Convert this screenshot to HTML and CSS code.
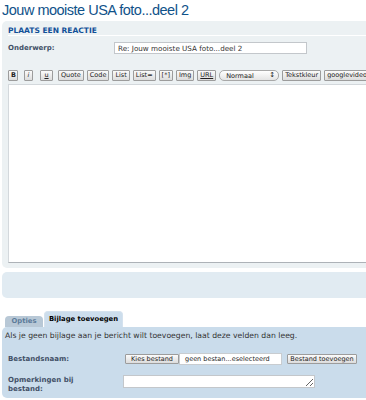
FILE: index.html
```html
<!DOCTYPE html>
<html>
<head>
  <meta charset="UTF-8">
  <title>Plaats een reactie</title>
  <link rel="stylesheet" href="styles.css">
</head>
<body>
  <div class="page">
    <h2 class="topic-title">Jouw mooiste USA foto...deel 2</h2>

    <div class="panel post-panel">
      <h3>Plaats een reactie</h3>

      <div class="subject-row">
        <label for="subject">Onderwerp:</label>
        <input id="subject" class="subject-input" type="text" value="Re: Jouw mooiste USA foto...deel 2">
      </div>

      <div class="toolbar">
        <button class="btn btn-b">B</button>
        <button class="btn btn-i">i</button>
        <button class="btn btn-u">u</button>
        <button class="btn">Quote</button>
        <button class="btn">Code</button>
        <button class="btn">List</button>
        <button class="btn">List=</button>
        <button class="btn">[*]</button>
        <button class="btn">Img</button>
        <button class="btn btn-url">URL</button>
        <div class="size-select">Normaal <span class="arrows">&#x2195;</span></div>
        <button class="btn">Tekstkleur</button>
        <button class="btn">googlevideo</button>
      </div>

      <textarea class="message"></textarea>
    </div>

    <div class="panel buttons-panel"></div>

    <ul class="tabs">
      <li class="tab">Opties</li>
      <li class="tab tab-active">Bijlage toevoegen</li>
    </ul>

    <div class="panel attach-panel">
      <p class="hint">Als je geen bijlage aan je bericht wilt toevoegen, laat deze velden dan leeg.</p>

      <div class="attach-row file-row">
        <label>Bestandsnaam:</label>
        <div class="file-input">
          <span class="btn choose">Kies bestand</span>
          <span class="file-name">geen bestan...eselecteerd</span>
        </div>
        <button class="btn add-file">Bestand toevoegen</button>
      </div>

      <div class="attach-row comment-row">
        <label for="comment">Opmerkingen bij bestand:</label>
        <textarea id="comment" class="comment"></textarea>
      </div>
    </div>
  </div>
</body>
</html>
```

FILE: styles.css
```css
html, body {
  margin: 0;
  overflow: hidden;
  background: #fff;
}
body {
  font-family: "DejaVu Sans", Verdana, sans-serif;
  color: #28313F;
}
.page {
  width: 364px;
  padding-left: 2px;
}
.topic-title {
  margin: 0 0 1px 0;
  font: normal 14.5px/20px "Liberation Sans", Arial, sans-serif;
  letter-spacing: -0.5px;
  color: #105289;
}
.panel {
  border-radius: 5px 0 0 5px;
}

/* reactie */
.post-panel {
  background: #ECF1F3;
  padding: 5px 0 5px 6px;
  overflow: hidden;
}
.post-panel h3 {
  margin: 0;
  font-size: 7.5px;
  line-height: 9px;
  font-weight: bold;
  text-transform: uppercase;
  color: #115098;
  border-bottom: 1px solid #fff;
}
.subject-row {
  display: flex;
  align-items: center;
  margin-top: 6px;
}
.subject-row label,
.attach-row label {
  font-size: 7px;
  line-height: 9px;
  font-weight: bold;
  color: #425067;
}
.subject-row label {
  width: 106px;
}
.subject-input {
  width: 193px;
  height: 12px;
  box-sizing: border-box;
  margin: 0;
  padding: 0 3px;
  border: 1px solid #C3C7CB;
  background: #fff;
  font-family: "DejaVu Sans", Verdana, sans-serif;
  font-size: 7.2px;
  color: #333;
  outline: none;
}
.toolbar {
  display: flex;
  gap: 3px;
  height: 11px;
  margin-top: 16px;
  overflow: hidden;
}
.btn {
  flex-shrink: 0;
  height: 11px;
  box-sizing: border-box;
  margin: 0;
  padding: 0 2px;
  border: 1px solid #9C9C9C;
  border-radius: 1px;
  background: linear-gradient(#FBFBFB, #DCDCDC);
  font-family: "DejaVu Sans", Verdana, sans-serif;
  font-size: 6.5px;
  line-height: 9px;
  color: #222;
  white-space: nowrap;
}
.btn-b {
  width: 10px;
  font-weight: bold;
  margin-right: 3px;
}
.btn-i {
  width: 9px;
  font-style: italic;
  margin-right: 4px;
}
.btn-u {
  width: 13px;
  text-decoration: underline;
  margin-right: 2px;
}
.btn-url {
  text-decoration: underline;
}
.size-select {
  flex-shrink: 0;
  display: flex;
  justify-content: space-between;
  align-items: center;
  width: 60px;
  height: 11px;
  box-sizing: border-box;
  padding: 0 3px 0 6px;
  border: 1px solid #A8A8A8;
  border-radius: 5px;
  background: linear-gradient(#FFFFFF, #E4E4E4);
  font-size: 6.5px;
  color: #222;
}
.size-select .arrows {
  font-size: 7px;
  line-height: 9px;
}
.message {
  display: block;
  width: 100%;
  height: 179px;
  box-sizing: border-box;
  margin: 3px 0 0 0;
  border: 1px solid #D3D8DC;
  border-right: none;
  border-bottom-color: #ADB2B7;
  background: #fff;
  resize: none;
  outline: none;
}

.buttons-panel {
  height: 26px;
  margin-top: 4px;
  background: #E1EBF2;
}

/* tabs */
.tabs {
  display: flex;
  align-items: flex-end;
  gap: 1px;
  height: 16px;
  margin: 13px 0 0 3px;
  padding: 0;
  list-style: none;
}
.tab {
  width: 38px;
  height: 11px;
  box-sizing: border-box;
  padding-top: 1px;
  border-radius: 4px 4px 0 0;
  background: #B8C8D6;
  font-size: 6.8px;
  line-height: 9px;
  font-weight: bold;
  text-align: center;
  color: #5C7B9A;
}
.tab-active {
  width: 79px;
  height: 16px;
  padding-top: 3px;
  border: 1px solid #D5E2EE;
  border-bottom: none;
  background: #CCDDEC;
  color: #000;
}

/* bijlage */
.attach-panel {
  height: 71px;
  box-sizing: border-box;
  padding: 4px 3px 0;
  background: #CADCEB;
}
.hint {
  margin: 0;
  font-size: 7.7px;
  line-height: 9px;
  color: #333;
  white-space: nowrap;
}
.attach-row {
  display: flex;
  padding-left: 3px;
}
.attach-row label {
  width: 115px;
  box-sizing: border-box;
  padding-right: 22px;
}
.file-row {
  align-items: center;
  margin-top: 13px;
}
.file-input {
  display: flex;
  align-items: center;
  margin-left: 2px;
}
.choose {
  display: block;
  width: 54px;
  height: 10px;
  text-align: center;
}
.file-name {
  width: 103px;
  height: 12px;
  box-sizing: border-box;
  padding-left: 5px;
  border: 1px solid #C8CCD0;
  background: #fff;
  font-size: 6.5px;
  line-height: 10px;
  color: #222;
}
.add-file {
  width: 70px;
  height: 10px;
  margin-left: 5px;
}
.comment-row {
  align-items: flex-start;
  margin-top: 10px;
}
.comment-row label {
  padding-top: 1px;
}
.comment {
  width: 192px;
  height: 13px;
  box-sizing: border-box;
  margin: 0;
  border: 1px solid #C3C7CB;
  background: #fff;
  outline: none;
}
```
